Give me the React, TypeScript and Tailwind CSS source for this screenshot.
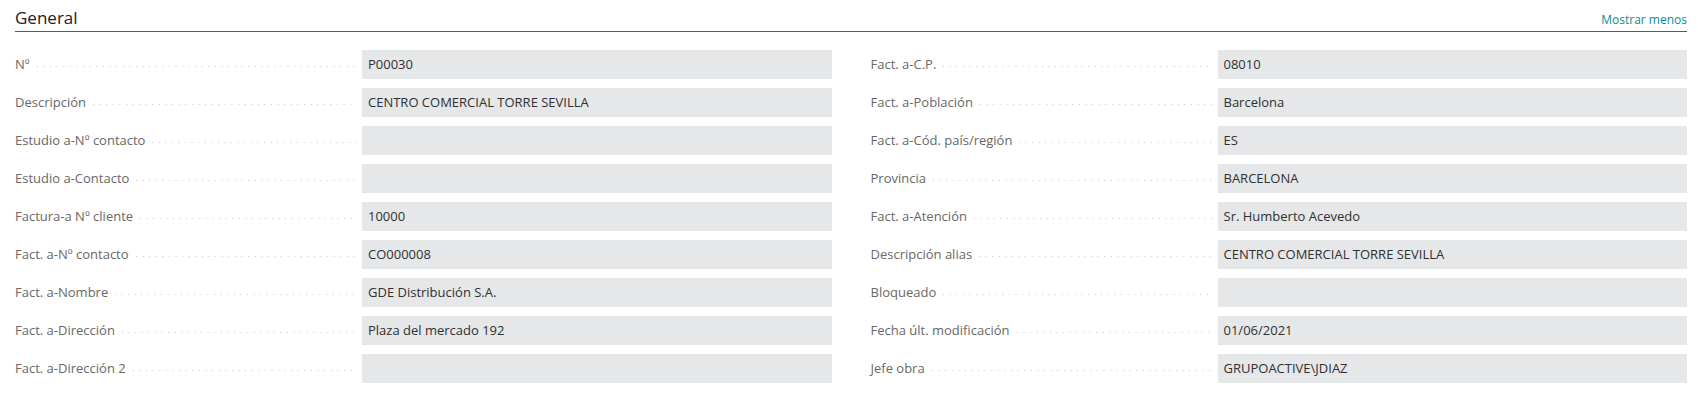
const left: [string, string][] = [
  ["Nº", "P00030"],
  ["Descripción", "CENTRO COMERCIAL TORRE SEVILLA"],
  ["Estudio a-Nº contacto", ""],
  ["Estudio a-Contacto", ""],
  ["Factura-a Nº cliente", "10000"],
  ["Fact. a-Nº contacto", "CO000008"],
  ["Fact. a-Nombre", "GDE Distribución S.A."],
  ["Fact. a-Dirección", "Plaza del mercado 192"],
  ["Fact. a-Dirección 2", ""],
];

const right: [string, string][] = [
  ["Fact. a-C.P.", "08010"],
  ["Fact. a-Población", "Barcelona"],
  ["Fact. a-Cód. país/región", "ES"],
  ["Provincia", "BARCELONA"],
  ["Fact. a-Atención", "Sr. Humberto Acevedo"],
  ["Descripción alias", "CENTRO COMERCIAL TORRE SEVILLA"],
  ["Bloqueado", ""],
  ["Fecha últ. modificación", "01/06/2021"],
  ["Jefe obra", "GRUPOACTIVE\\JDIAZ"],
];

function Field({ label, value }: { label: string; value: string }) {
  return (
    <div className="flex h-[29px] items-center">
      <div className="flex w-[347px] shrink-0 items-center">
        <span className="whitespace-nowrap text-[13px] text-[#686868]">{label}</span>
        <div className="ml-[7px] mr-[5px] mt-[3px] h-px flex-1 bg-[linear-gradient(to_right,#c4c4c4_1px,transparent_1px)] bg-[length:6.6px_1px] bg-repeat-x" />
      </div>
      <div className="flex h-full flex-1 items-center bg-[#e6e7e8] pl-[6px] text-[13px] text-[#303030]">
        {value}
      </div>
    </div>
  );
}

export default function App() {
  return (
    <div className="min-h-[415px] bg-white pl-[15px] pr-[11px] font-['Open_Sans',sans-serif]">
      <div className="flex h-[32px] items-end justify-between border-b border-[#535b69] pb-[5px]">
        <h2 className="text-[17px] leading-none text-[#212121]">General</h2>
        <button className="text-[12px] leading-none text-[#0a8d92]">Mostrar menos</button>
      </div>
      <div className="grid grid-cols-2 gap-x-[39px] pt-[18px]">
        <div className="flex flex-col gap-[9px]">
          {left.map(([l, v]) => (
            <Field key={l} label={l} value={v} />
          ))}
        </div>
        <div className="flex flex-col gap-[9px]">
          {right.map(([l, v]) => (
            <Field key={l} label={l} value={v} />
          ))}
        </div>
      </div>
    </div>
  );
}
